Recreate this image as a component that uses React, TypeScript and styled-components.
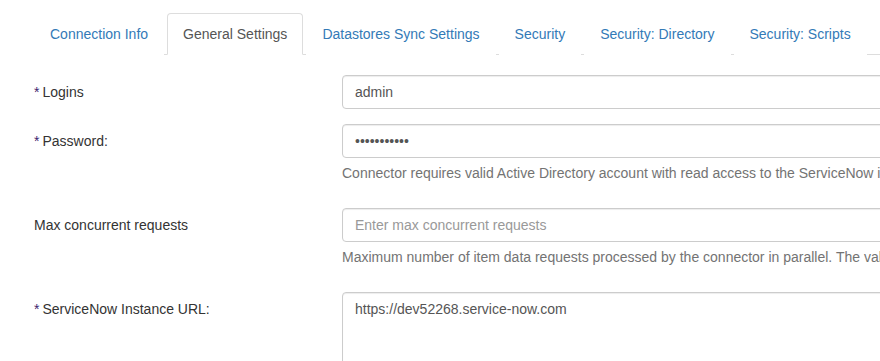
import React from "react";
import styled, { createGlobalStyle } from "styled-components";

const GlobalStyle = createGlobalStyle`
  html, body {
    margin: 0;
    padding: 0;
    background: #fff;
    overflow: hidden;
  }
  body {
    font-family: "Liberation Sans", Arial, Helvetica, sans-serif;
    font-size: 14px;
    line-height: 20px;
    color: #333;
  }
  * {
    box-sizing: border-box;
  }
`;

const Page = styled.div`
  width: 1400px;
  padding: 13px 0 0 34px;
`;

const Tabs = styled.ul`
  display: flex;
  list-style: none;
  margin: 0;
  padding: 0;
  border-bottom: 1px solid #ddd;
`;

const Tab = styled.li<{ $active?: boolean }>`
  margin-right: 3px;
  margin-bottom: -1px;
  padding: 10px 15px;
  line-height: 20px;
  border: 1px solid ${(p) => (p.$active ? "#ddd" : "transparent")};
  border-bottom-color: ${(p) => (p.$active ? "#fff" : "transparent")};
  border-radius: 4px 4px 0 0;
  background: #fff;
  color: ${(p) => (p.$active ? "#555" : "#337ab7")};
  cursor: pointer;
  white-space: nowrap;
`;

const Form = styled.form`
  margin-top: 20px;
`;

const FormGroup = styled.div`
  display: grid;
  grid-template-columns: 308px 1000px;
  margin-bottom: 15px;
`;

const Label = styled.label`
  padding-top: 7px;
  line-height: 20px;
  color: #333;
`;

const Required = styled.span`
  color: #3d1f6e;
  margin-right: 3px;
`;

const fieldStyles = `
  display: block;
  width: 100%;
  padding: 6px 12px;
  font-family: inherit;
  font-size: 14px;
  line-height: 20px;
  color: #555;
  background: #fff;
  border: 1px solid #ccc;
  border-radius: 4px;
  box-shadow: inset 0 1px 1px rgba(0, 0, 0, 0.075);
  outline: none;
  &::placeholder {
    color: #999;
  }
`;

const Input = styled.input`
  ${fieldStyles}
  height: 34px;
`;

const TextArea = styled.textarea`
  ${fieldStyles}
  height: 120px;
  resize: none;
`;

const Help = styled.p`
  margin: 5px 0 10px;
  color: #737373;
  white-space: nowrap;
`;

const tabs = [
  "Connection Info",
  "General Settings",
  "Datastores Sync Settings",
  "Security",
  "Security: Directory",
  "Security: Scripts",
];

export default function App() {
  return (
    <Page>
      <GlobalStyle />
      <Tabs>
        {tabs.map((t) => (
          <Tab key={t} $active={t === "General Settings"}>
            {t}
          </Tab>
        ))}
      </Tabs>
      <Form onSubmit={(e) => e.preventDefault()}>
        <FormGroup>
          <Label>
            <Required>*</Required>Logins
          </Label>
          <div>
            <Input type="text" defaultValue="admin" />
          </div>
        </FormGroup>
        <FormGroup>
          <Label>
            <Required>*</Required>Password:
          </Label>
          <div>
            <Input type="password" defaultValue="passwordxyz" />
            <Help>
              Connector requires valid Active Directory account with read access to the ServiceNow instance.
            </Help>
          </div>
        </FormGroup>
        <FormGroup>
          <Label>Max concurrent requests</Label>
          <div>
            <Input type="text" placeholder="Enter max concurrent requests" />
            <Help>
              Maximum number of item data requests processed by the connector in parallel. The value must be between 1 and 10.
            </Help>
          </div>
        </FormGroup>
        <FormGroup>
          <Label>
            <Required>*</Required>ServiceNow Instance URL:
          </Label>
          <div>
            <TextArea defaultValue="https://dev52268.service-now.com" />
          </div>
        </FormGroup>
      </Form>
    </Page>
  );
}
